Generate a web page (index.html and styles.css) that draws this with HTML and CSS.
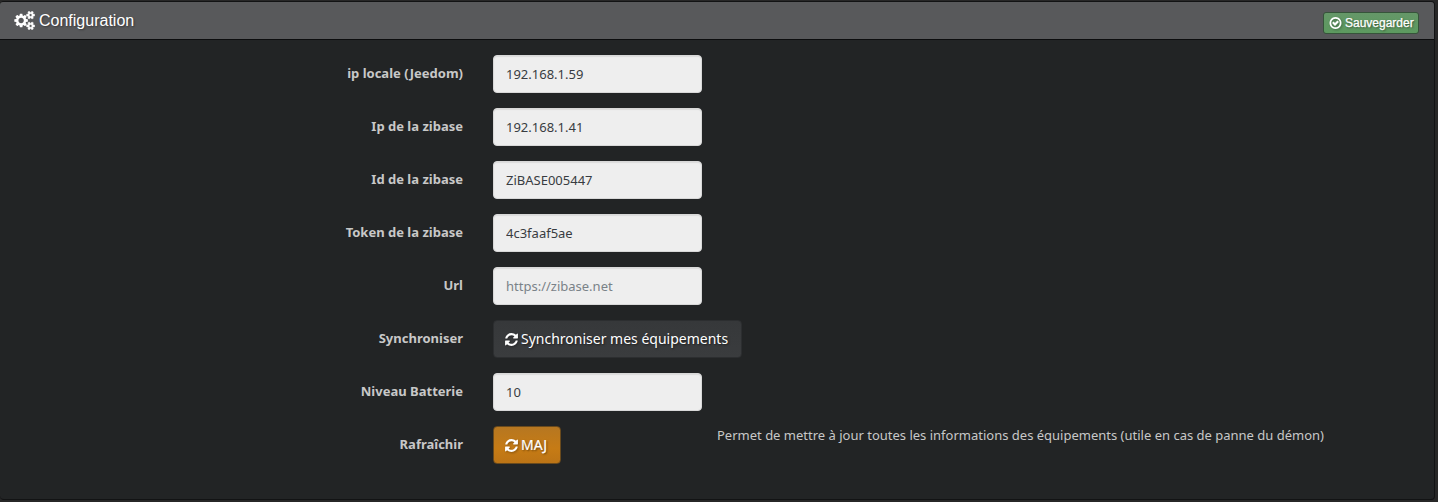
FILE: index.html
```html
<!DOCTYPE html>
<html lang="fr">
<head>
<meta charset="utf-8">
<title>Configuration</title>
<link rel="stylesheet" href="styles.css">
</head>
<body>
<svg width="0" height="0" class="defs">
<symbol id="refresh" viewBox="128 0 1536 1792"><path d="M1639 1056q0 5-1 7-64 268-268 434.500t-478 166.500q-146 0-282.500-55t-243.500-157l-129 129q-19 19-45 19t-45-19-19-45v-448q0-26 19-45t45-19h448q26 0 45 19t19 45-19 45l-137 137q71 66 161 102t187 36q134 0 250-65t186-179q11-17 53-117 8-23 30-23h192q13 0 22.500 9.500t9.500 22.500zm25-800v448q0 26-19 45t-45 19h-448q-26 0-45-19t-19-45 19-45l138-138q-148-137-349-137-134 0-250 65t-186 179q-11 17-53 117-8 23-30 23h-199q-13 0-22.500-9.500t-9.500-22.500v-7q65-268 270-434.500t480-166.500q146 0 284 55.500t245 156.500l130-129q19-19 45-19t45 19 19 45z"/></symbol>
</svg>
<section class="panel">
  <header class="panel-heading">
    <h3 class="panel-title">
      <svg class="cogs" viewBox="0 0 1920 1792"><path d="M896 896q0-106-75-181t-181-75-181 75-75 181 75 181 181 75 181-75 75-181zm384-91v185q0 10-7 19.500t-16 10.500l-155 24q-11 35-32 76 34 48 90 115 7 11 7 20 0 12-7 19-23 30-82.500 89.500t-78.500 59.500q-11 0-21-7l-115-90q-37 19-77 31-11 108-23 155-7 24-30 24h-186q-11 0-20-7.500t-10-17.500l-23-153q-34-10-75-31l-118 89q-7 7-20 7-11 0-21-8-144-133-144-160 0-9 7-19 10-14 41-53t47-61q-23-44-35-82l-152-24q-10-1-17-9.500t-7-19.500v-185q0-10 7-19.500t16-10.500l155-24q11-35 32-76-34-48-90-115-7-11-7-20 0-12 7-20 22-30 82-89t79-59q11 0 21 7l115 90q34-18 77-32 11-108 23-154 7-24 30-24h186q11 0 20 7.500t10 17.500l23 153q34 10 75 31l118-89q8-7 20-7 11 0 21 8 144 133 144 160 0 8-7 19-12 16-42 54t-45 60q23 48 34 82l152 23q10 2 17 10.500t7 19.500z"/><g class="small-gears"><path id="gear" d="M1664 1408q0-52-38-90t-90-38-90 38-38 90q0 53 37.500 90.500t90.500 37.500 90.500-37.500 37.500-90.500zm256-70v140q0 16-149 31-12 27-30 52 51 113 51 138 0 4-4 7-122 71-124 71-8 0-46-47t-52-68q-20 2-30 2t-30-2q-14 21-52 68t-46 47q-2 0-124-71-4-3-4-7 0-25 51-138-18-25-30-52-149-15-149-31v-140q0-16 149-31 13-29 30-52-51-113-51-138 0-4 4-7 4-2 35-20t59-34 30-16q8 0 46 46.500t52 67.500q20-2 30-2t30 2q51-71 92-112l6-2q4 0 124 70 4 3 4 7 0 25-51 138 17 23 30 52 149 15 149 31z"/><use href="#gear" y="-1024"/></g></svg>
      <span>Configuration</span>
    </h3>
    <button class="btn btn-save">
      <svg class="check" viewBox="128 0 1536 1792"><path d="M1299 813l-422 422q-19 19-45 19t-45-19l-294-294q-19-19-19-45t19-45l102-102q19-19 45-19t45 19l147 147 275-275q19-19 45-19t45 19l102 102q19 19 19 45t-19 45zm141 83q0-148-73-273t-198-198-273-73-273 73-198 198-73 273 73 273 198 198 273 73 273-73 198-198 73-273zm224 0q0 209-103 385.500t-279.500 279.500-385.500 103-385.500-103-279.500-279.500-103-385.500 103-385.500 279.500-279.500 385.500-103 385.500 103 279.500 279.500 103 385.500z"/></svg>
      <span>Sauvegarder</span>
    </button>
  </header>
  <form class="form">
    <div class="row"><label>ip locale (Jeedom)</label><input value="192.168.1.59"></div>
    <div class="row"><label>Ip de la zibase</label><input value="192.168.1.41"></div>
    <div class="row"><label>Id de la zibase</label><input value="ZiBASE005447"></div>
    <div class="row"><label>Token de la zibase</label><input value="4c3faaf5ae"></div>
    <div class="row"><label>Url</label><input placeholder="https://zibase.net"></div>
    <div class="row"><label>Synchroniser</label><button type="button" class="btn btn-sync"><svg class="refresh"><use href="#refresh"/></svg><span>Synchroniser mes équipements</span></button></div>
    <div class="row"><label>Niveau Batterie</label><input value="10"></div>
    <div class="row"><label>Rafraîchir</label><div class="action"><button type="button" class="btn btn-warning"><svg class="refresh"><use href="#refresh"/></svg><span>MAJ</span></button></div><span class="help">Permet de mettre à jour toutes les informations des équipements (utile en cas de panne du démon)</span></div>
  </form>
</section>
</body>
</html>
```
FILE: styles.css
```css
* { box-sizing: border-box; }
body {
  margin: 0;
  height: 502px;
  overflow: hidden;
  background: #272727;
  color: #c8c8c8;
  font: 13px/18px "Noto Sans", sans-serif;
}
.defs { display: block; }
svg { fill: currentColor; flex: none; }
.panel {
  width: 1435px;
  height: 499px;
  margin-top: 1px;
  background: #222425;
  border: 1px solid #121314;
  border-left: 0;
  border-radius: 4px;
}
.panel-heading {
  height: 38px;
  display: flex;
  justify-content: space-between;
  align-items: center;
  padding: 0 15px 0 14px;
  color: #fff;
  background: #58595b;
  border-bottom: 1px solid #0c0d0e;
  border-radius: 3px 3px 0 0;
}
.panel-title {
  margin: 0;
  display: flex;
  align-items: center;
  gap: 4px;
  font: 16px/18px "Liberation Sans", Arial, sans-serif;
  text-shadow: 1px 1px 2px rgba(0,0,0,.4);
}
.cogs { width: 21px; height: 19px; }
.small-gears { stroke: currentColor; stroke-width: 50px; }
.btn {
  display: inline-flex;
  align-items: center;
  padding: 0;
  color: #fff;
  border: 1px solid #2c2e30;
  border-radius: 4px;
  font: 14px/20px "Noto Sans", sans-serif;
  text-shadow: 1px 1px 2px rgba(0,0,0,.5);
  white-space: nowrap;
}
.btn svg { filter: drop-shadow(1px 1px 1px rgba(0,0,0,.3)); }
.btn-save {
  width: 96px;
  height: 22px;
  margin-top: 5px;
  padding-left: 5px;
  gap: 3px;
  background: linear-gradient(#659768, #5c9a5f);
  border-color: #36543a;
  border-radius: 3px;
  font: 12px/18px "Liberation Sans", Arial, sans-serif;
  -webkit-text-stroke: .25px #fff;
}
.check { width: 13px; height: 14px; }
.form {
  display: flex;
  flex-direction: column;
  gap: 15px;
  padding-top: 15px;
}
.row { display: flex; height: 38px; }
label {
  width: 463px;
  margin-right: 30px;
  padding-top: 9px;
  text-align: right;
  font-weight: 700;
}
input {
  width: 209px;
  height: 38px;
  padding: 0 12px;
  color: #383c41;
  background: #eee;
  border: 1px solid #d8d8d8;
  border-radius: 4px;
  box-shadow: inset 0 1px 1px rgba(0,0,0,.08);
  font: 13px/18px "Noto Sans", sans-serif;
}
input::placeholder { color: #7a8288; opacity: 1; }
.refresh { width: 13px; height: 15px; margin-right: 3px; }
.btn-sync {
  width: 249px;
  height: 38px;
  padding-left: 11px;
  background: linear-gradient(#36383a, #3a3c3e);
}
.action { width: 224px; }
.btn-warning {
  width: 68px;
  height: 38px;
  padding-left: 11px;
  background: linear-gradient(#b67721, #c67b15 60%, #bc7416);
  border-color: #6a4a1c;
  -webkit-text-stroke: .2px #fff;
}
```
